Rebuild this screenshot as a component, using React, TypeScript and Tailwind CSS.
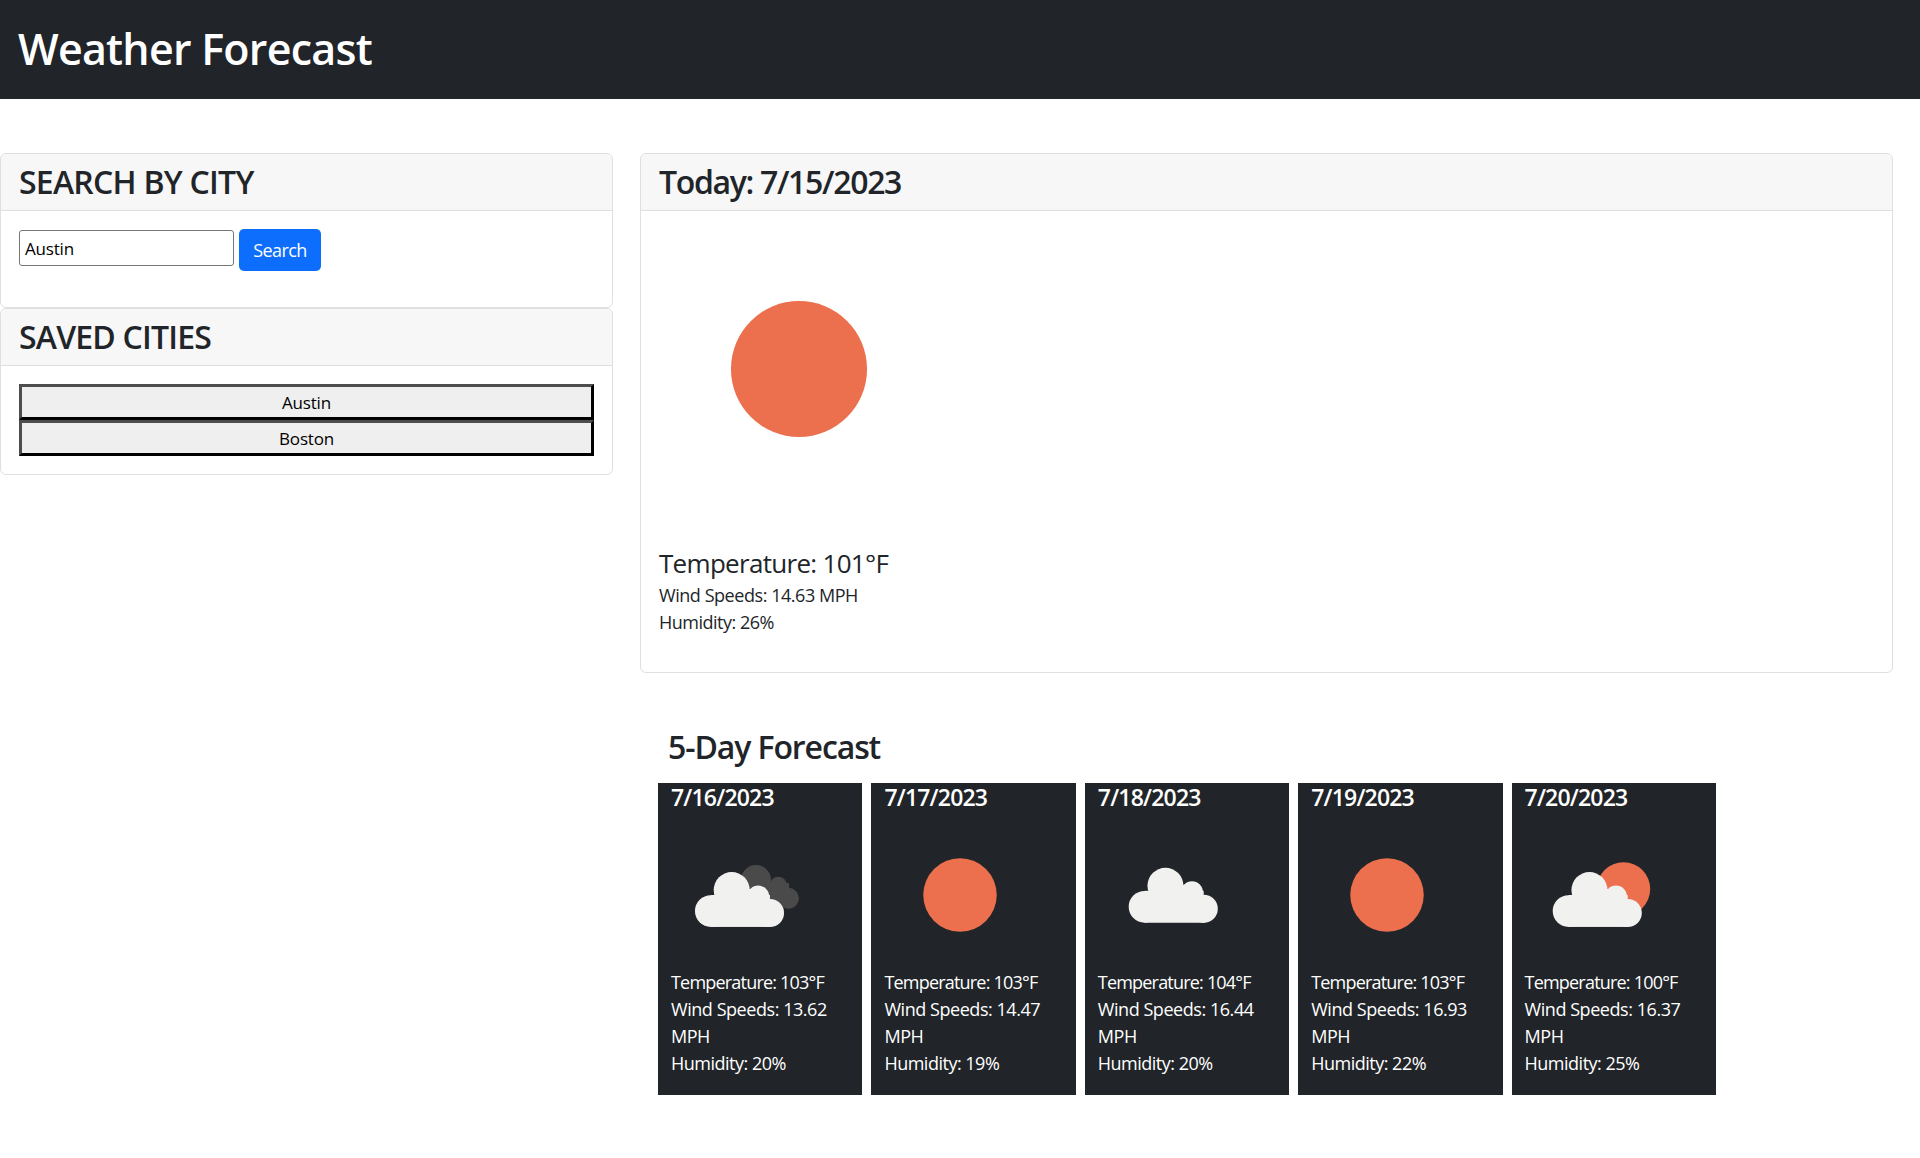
const font = { fontFamily: '"Open Sans", sans-serif' };

function Sun({ cx = 50, cy = 50, r = 24.5 }: { cx?: number; cy?: number; r?: number }) {
  return <circle cx={cx} cy={cy} r={r} fill="#ec6f4e" />;
}

function Cloud({ dx = 0, dy = 0 }: { dx?: number; dy?: number }) {
  return (
    <g transform={`translate(${dx} ${dy})`} fill="#f1f1ef">
      <circle cx="25.9" cy="60.7" r="10.6" />
      <circle cx="39.8" cy="46.7" r="12" />
      <circle cx="57.5" cy="51" r="7.3" />
      <circle cx="65.3" cy="62" r="9.4" />
      <rect x="25.9" y="50" width="39.4" height="21.3" />
      <rect x="30" y="46" width="28" height="10" />
    </g>
  );
}

function DarkCloud() {
  return (
    <g fill="#4a4a4a">
      <circle cx="56" cy="40" r="10" />
      <circle cx="70.9" cy="43.3" r="5.5" />
      <circle cx="77.6" cy="52.2" r="7" />
      <rect x="58" y="42" width="20" height="14" />
    </g>
  );
}

function Icon({ kind, size, sunR }: { kind: string; size: number; sunR?: number }) {
  return (
    <svg viewBox="0 0 100 100" width={size} height={size} className="block shrink-0">
      {kind === "sun" && <Sun r={sunR} />}
      {kind === "broken" && (
        <>
          <DarkCloud />
          <Cloud />
        </>
      )}
      {kind === "cloud" && <Cloud dx={4.5} dy={-2.8} />}
      {kind === "few" && (
        <>
          <Sun cx={65} cy={46} r={17.8} />
          <Cloud dx={2.5} />
        </>
      )}
    </svg>
  );
}

const days = [
  { date: "7/16/2023", kind: "broken", temp: "103", wind: "13.62", hum: "20" },
  { date: "7/17/2023", kind: "sun", temp: "103", wind: "14.47", hum: "19" },
  { date: "7/18/2023", kind: "cloud", temp: "104", wind: "16.44", hum: "20" },
  { date: "7/19/2023", kind: "sun", temp: "103", wind: "16.93", hum: "22" },
  { date: "7/20/2023", kind: "few", temp: "100", wind: "16.37", hum: "25" },
];

function CardHead({ children, tracking }: { children: React.ReactNode; tracking: string }) {
  return (
    <div className="bg-[#f7f7f7] border-b border-[#dfdfdf] px-[18px] py-[9px] h-[57px] rounded-t-[6px]">
      <h2 className={`text-[32px] leading-[38px] font-semibold text-[#212529] ${tracking}`}>{children}</h2>
    </div>
  );
}

function SavedCity({ name }: { name: string }) {
  return (
    <button className="block w-full h-[36px] pt-[1px] bg-[#efefef] border-[3px] border-t-[#4d4d4d] border-l-[#4d4d4d] border-r-black border-b-black text-[17px] leading-[28px] text-black tracking-[-0.2px]">
      {name}
    </button>
  );
}

export default function App() {
  return (
    <div style={font} className="min-h-[1158px] bg-white text-[#212529]">
      <header className="bg-[#212529] h-[99px] flex items-center pl-[18px] pb-[3px]">
        <h1 className="text-[43px] font-semibold text-white tracking-[-0.75px] leading-none">Weather Forecast</h1>
      </header>
      <main className="flex gap-[27px] pt-[54px] items-start">
        <aside className="w-[613px] shrink-0">
          <section className="border border-[#dfdfdf] rounded-[6px] h-[155px]">
            <CardHead tracking="tracking-[-0.75px]">SEARCH BY CITY</CardHead>
            <div className="px-[18px] pt-[18px] flex items-start gap-[5px]">
              <input
                readOnly
                value="Austin"
                className="w-[215px] h-[36px] mt-[1px] border border-[#767676] rounded-[3px] px-[5px] text-[17px] text-black tracking-[-0.2px] bg-white"
              />
              <button className="w-[82px] h-[42px] bg-[#0d6efd] rounded-[5px] text-white text-[18px] tracking-[-0.6px]">Search</button>
            </div>
          </section>
          <section className="border border-[#dfdfdf] rounded-[6px] h-[167px]">
            <CardHead tracking="tracking-[-0.8px]">SAVED CITIES</CardHead>
            <div className="px-[18px] pt-[18px] flex flex-col">
              <SavedCity name="Austin" />
              <SavedCity name="Boston" />
            </div>
          </section>
        </aside>
        <div className="w-[1253px] shrink-0">
          <section className="border border-[#dfdfdf] rounded-[6px] h-[520px]">
            <CardHead tracking="tracking-[-1.33px]">Today: 7/15/2023</CardHead>
            <div className="px-[18px] pt-[18px]">
              <Icon kind="sun" size={280} sunR={24.3} />
              <p className="mt-[38px] text-[26px] leading-[32px] tracking-[-0.7px]">Temperature: 101°F</p>
              <p className="mt-[3px] text-[18px] leading-[27px] tracking-[-0.45px]">Wind Speeds: 14.63 MPH</p>
              <p className="text-[18px] leading-[27px] tracking-[-0.5px]">Humidity: 26%</p>
            </div>
          </section>
          <h2 className="mt-[55px] ml-[28px] text-[32px] leading-[38px] font-semibold tracking-[-1.1px]">5-Day Forecast</h2>
          <div className="flex gap-[9px] mt-[17px] ml-[18px]">
            {days.map((d) => (
              <article key={d.date} className="w-[204.4px] h-[312px] bg-[#212529] text-white pl-[13px] pr-[14px]">
                <h3 className="text-[23px] leading-[28px] font-semibold tracking-[-0.8px]">{d.date}</h3>
                <div className="mt-[9px] ml-[1px]">
                  <Icon kind={d.kind} size={150} />
                </div>
                <div className="mt-[-1px] text-[18px] leading-[27px]">
                  <p className="tracking-[-0.8px]">Temperature: {d.temp}°F</p>
                  <p className="tracking-[-0.45px]">Wind Speeds: {d.wind} MPH</p>
                  <p className="tracking-[-0.5px]">Humidity: {d.hum}%</p>
                </div>
              </article>
            ))}
          </div>
        </div>
      </main>
    </div>
  );
}
